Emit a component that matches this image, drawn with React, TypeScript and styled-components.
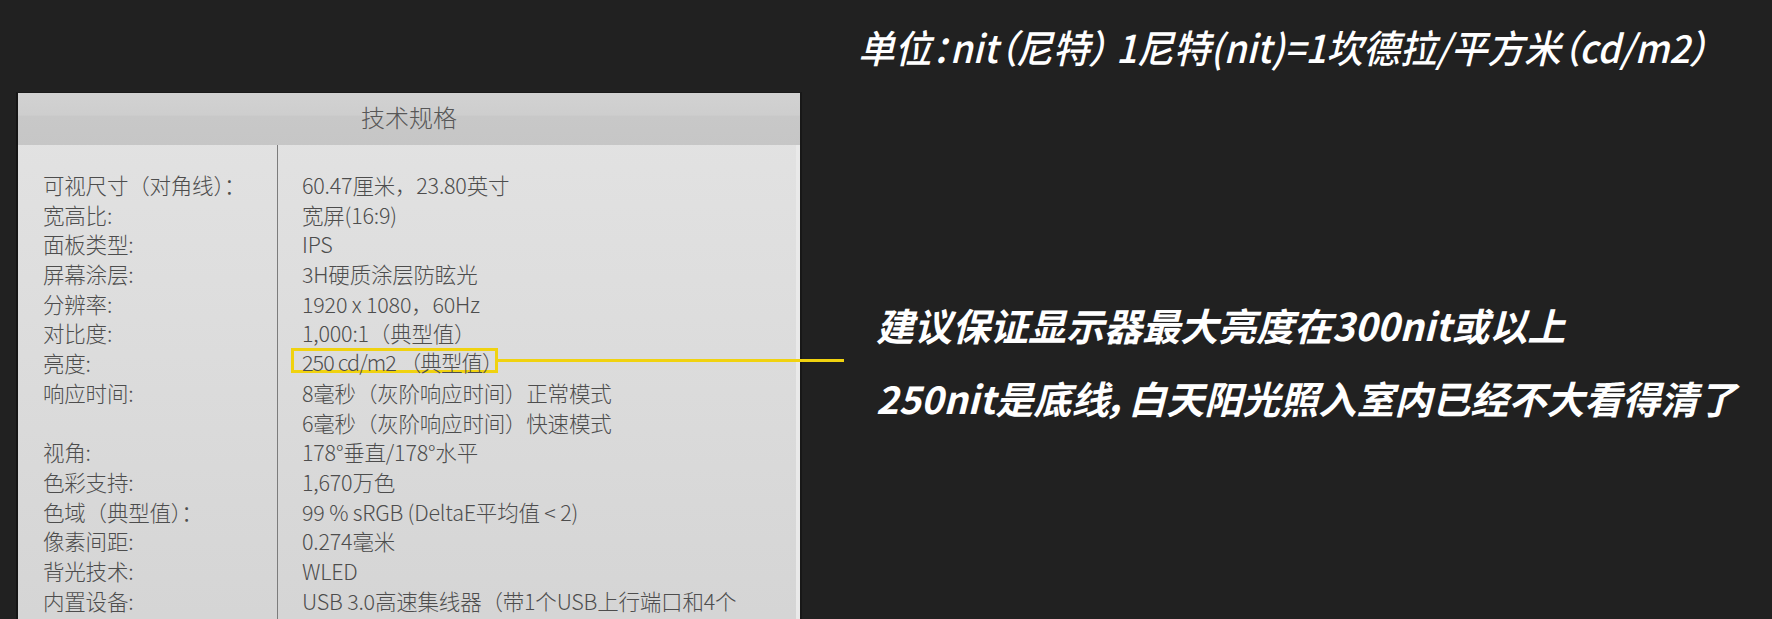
import React from "react";
import styled, { createGlobalStyle } from "styled-components";

const GlobalStyle = createGlobalStyle`
  html, body {
    margin: 0;
    padding: 0;
    background: #212121;
  }
  body {
    width: 1772px;
    height: 619px;
    overflow: hidden;
  }
`;

const Stage = styled.div`
  display: grid;
  grid-template-columns: 786px 1fr;
  grid-template-rows: 92px 1fr;
  column-gap: 56px;
  padding-left: 16px;
  height: 619px;
  overflow: hidden;
  font-family: "Noto Sans CJK SC", "Noto Sans", sans-serif;
`;

const Caption = styled.div`
  grid-column: 2;
  grid-row: 1;
  padding-top: 27px;
  color: #ffffff;
  font-size: 38.5px;
  line-height: 38.5px;
  font-style: italic;
  font-weight: 500;
  font-feature-settings: "palt";
  white-space: nowrap;
  transform: scaleX(0.953);
  transform-origin: left center;
`;

const Panel = styled.section`
  grid-column: 1;
  grid-row: 2;
  display: flex;
  flex-direction: column;
  border-left: 2px solid #151515;
  border-top: 1px solid #1a1a1a;
  border-right: 2px solid #181818;
  box-shadow: inset -4px 0 0 #e9e9e9;
  background: linear-gradient(#e3e3e3, #d4d4d4);
  min-height: 560px;
`;

const Header = styled.header`
  height: 52px;
  display: flex;
  align-items: center;
  justify-content: center;
  background: linear-gradient(#d2d2d2 0%, #cecece 42%, #c8c8c8 45%, #c6c6c6 100%);
  color: #575757;
  font-size: 24px;
  font-weight: 300;
  padding-bottom: 5px;
  box-sizing: border-box;
`;

const Body = styled.div`
  flex: 1;
  display: grid;
  grid-template-columns: 260px 1fr;
  color: #4d4d4d;
  font-size: 21.5px;
  font-weight: 300;
`;

const Column = styled.div<{ $divider?: boolean; $indent: number }>`
  display: flex;
  flex-direction: column;
  padding: 25px 0 0 ${(p) => p.$indent}px;
  border-right: ${(p) => (p.$divider ? "1px solid #7c7c7c" : "none")};
`;

const Line = styled.div`
  height: 29.7px;
  line-height: 29.7px;
  white-space: nowrap;
  letter-spacing: -0.2px;
`;

const Highlight = styled.span`
  position: relative;
  display: inline-block;
  top: -1px;
  margin-left: -11px;
  padding: 0 8px;
  width: 207px;
  height: 25px;
  line-height: 22px;
  border: 3px solid #f0d20f;
  box-sizing: border-box;
  white-space: nowrap;
  letter-spacing: -0.9px;
  &::after {
    content: "";
    position: absolute;
    left: 100%;
    top: 50%;
    margin-top: -2px;
    width: 349px;
    height: 3px;
    background: #f0d20f;
  }
`;

const Notes = styled.div`
  grid-column: 2;
  grid-row: 2;
  display: flex;
  flex-direction: column;
  gap: 35px;
  padding: 214px 0 0 18px;
  color: #ffffff;
  font-size: 38px;
  line-height: 38px;
  font-style: italic;
  font-weight: 700;
  font-feature-settings: "palt";
  white-space: nowrap;
`;

const specs: [string, string][] = [
  ["可视尺寸（对角线）：", "60.47厘米，23.80英寸"],
  ["宽高比:", "宽屏(16:9)"],
  ["面板类型:", "IPS"],
  ["屏幕涂层:", "3H硬质涂层防眩光"],
  ["分辨率:", "1920 x 1080，60Hz"],
  ["对比度:", "1,000:1（典型值）"],
  ["亮度:", "250 cd/m2 （典型值）"],
  ["响应时间:", "8毫秒（灰阶响应时间）正常模式"],
  ["", "6毫秒（灰阶响应时间）快速模式"],
  ["视角:", "178°垂直/178°水平"],
  ["色彩支持:", "1,670万色"],
  ["色域（典型值）：", "99 % sRGB (DeltaE平均值 < 2)"],
  ["像素间距:", "0.274毫米"],
  ["背光技术:", "WLED"],
  ["内置设备:", "USB 3.0高速集线器（带1个USB上行端口和4个"],
];

export default function App() {
  return (
    <>
      <GlobalStyle />
      <Stage>
        <Caption>单位：nit（尼特） 1尼特(nit)=1坎德拉/平方米（cd/m2）</Caption>
        <Panel>
          <Header>技术规格</Header>
          <Body>
            <Column $divider $indent={25}>
              {specs.map(([label], i) => (
                <Line key={i}>{label}</Line>
              ))}
            </Column>
            <Column $indent={24}>
              {specs.map(([, value], i) => (
                <Line key={i}>
                  {i === 6 ? <Highlight>{value}</Highlight> : value}
                </Line>
              ))}
            </Column>
          </Body>
        </Panel>
        <Notes>
          <div>建议保证显示器最大亮度在300nit或以上</div>
          <div>250nit是底线，白天阳光照入室内已经不大看得清了</div>
        </Notes>
      </Stage>
    </>
  );
}
